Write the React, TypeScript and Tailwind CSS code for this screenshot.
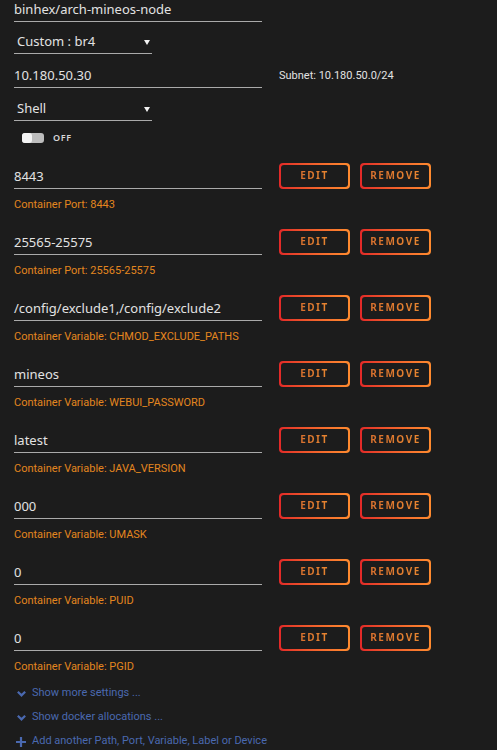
import React from 'react';

type Entry = { value: string; label: string };

const ENTRIES: Entry[] = [
  { value: '8443', label: 'Container Port: 8443' },
  { value: '25565-25575', label: 'Container Port: 25565-25575' },
  { value: '/config/exclude1,/config/exclude2', label: 'Container Variable: CHMOD_EXCLUDE_PATHS' },
  { value: 'mineos', label: 'Container Variable: WEBUI_PASSWORD' },
  { value: 'latest', label: 'Container Variable: JAVA_VERSION' },
  { value: '000', label: 'Container Variable: UMASK' },
  { value: '0', label: 'Container Variable: PUID' },
  { value: '0', label: 'Container Variable: PGID' },
];

const GradientButton: React.FC<{ text: string }> = ({ text }) => (
  <div className="rounded-[4px] bg-gradient-to-r from-[#e22828] to-[#ff8b2f] p-[2px]">
    <div className="flex h-[22px] w-[67px] items-center justify-center rounded-[3px] bg-[#1c1c1c]">
      <span className="bg-gradient-to-r from-[#d8702e] to-[#e88630] bg-clip-text text-[10px] font-bold tracking-[0.15em] text-transparent">
        {text}
      </span>
    </div>
  </div>
);

const TextLine: React.FC<{ value: string }> = ({ value }) => (
  <div className="flex h-[23px] w-[248px] items-center border-b border-[#aaaaaa] text-[13px] text-[#e2e2e2]">
    {value}
  </div>
);

const SelectLine: React.FC<{ value: string }> = ({ value }) => (
  <div className="flex h-[23px] w-[138px] items-center justify-between border-b border-[#aaaaaa] pl-[3px] pr-[2px] text-[13px] text-[#e2e2e2]">
    <span>{value}</span>
    <svg width="6" height="6" viewBox="0 0 6 6">
      <path d="M0 1 L6 1 L3 6 Z" fill="#f2f2f2" />
    </svg>
  </div>
);

const ChevronDown = () => (
  <svg width="11" height="11" viewBox="0 0 12 12" className="mr-[5px]">
    <path d="M2 4 L6 8 L10 4" stroke="#4a69b0" strokeWidth="2.4" fill="none" />
  </svg>
);

const App: React.FC = () => {
  return (
    <div
      className="min-h-[750px] bg-[#1c1c1c] pl-[14px]"
      style={{ fontFamily: '"Noto Sans", "Open Sans", sans-serif' }}
    >
      <div className="-mt-[1px]">
        <TextLine value="binhex/arch-mineos-node" />
      </div>
      <div className="mt-[9px]">
        <SelectLine value="Custom : br4" />
      </div>
      <div className="mt-[11px] flex items-center">
        <TextLine value="10.180.50.30" />
        <span className="ml-[17px] font-['Roboto'] text-[11px] text-[#e2e2e2]">Subnet: 10.180.50.0/24</span>
      </div>
      <div className="mt-[10px]">
        <SelectLine value="Shell" />
      </div>
      <div className="mt-[10px] flex items-center pl-[8px]">
        <div className="flex h-[10px] w-[22px] items-center rounded-[3px] bg-[#bdbdbd]">
          <div className="h-[10px] w-[10px] rounded-[3px] bg-[#f4f4f4]" />
        </div>
        <span className="ml-[9px] text-[9px] font-semibold tracking-[0.08em] text-[#d8d8d8]">OFF</span>
      </div>

      <div className="mt-[18px] flex flex-col">
        {ENTRIES.map((e, i) => (
          <div key={i} className="h-[66px]">
            <div className="flex items-end">
              <div className="flex h-[26px] items-end">
                <TextLine value={e.value} />
              </div>
              <div className="ml-[17px] flex gap-[10px]">
                <GradientButton text="EDIT" />
                <GradientButton text="REMOVE" />
              </div>
            </div>
            <div className="mt-[8px] font-['Roboto'] text-[11px] text-[#e3861f]">{e.label}</div>
          </div>
        ))}
      </div>

      <div className="-mt-[9px] flex flex-col font-['Roboto'] text-[11px] text-[#4a69b0]">
        <div className="flex h-[24px] items-center pl-[2px]">
          <ChevronDown />
          Show more settings ...
        </div>
        <div className="flex h-[24px] items-center pl-[2px]">
          <ChevronDown />
          Show docker allocations ...
        </div>
        <div className="flex h-[24px] items-center pl-[2px]">
          <svg width="10" height="10" viewBox="0 0 10 10" className="mr-[6px]">
            <path d="M5 0 V10 M0 5 H10" stroke="#4a69b0" strokeWidth="2.2" />
          </svg>
          Add another Path, Port, Variable, Label or Device
        </div>
      </div>
    </div>
  );
};

export default App;
